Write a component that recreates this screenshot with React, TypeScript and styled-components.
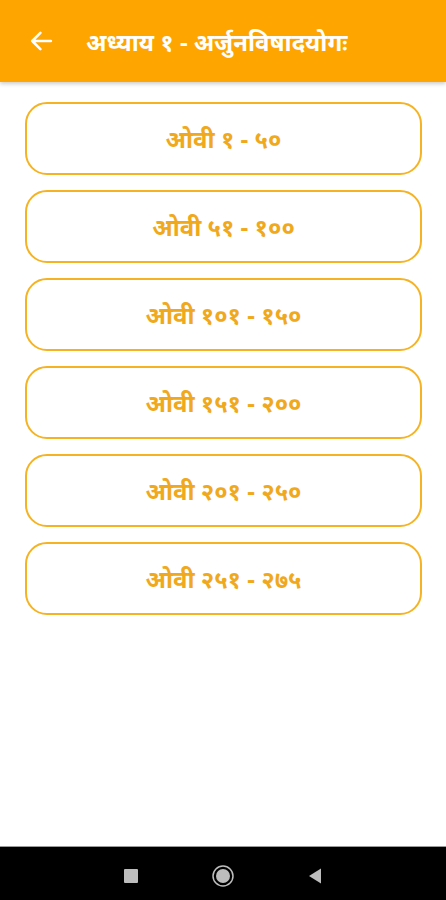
import { FunctionComponent } from "react";
import styled, { createGlobalStyle } from "styled-components";

const GlobalStyle = createGlobalStyle`
  html, body {
    margin: 0;
    padding: 0;
    background: #fff;
    font-family: "Noto Sans", "Roboto", sans-serif;
  }
`;

const Screen = styled.div`
  width: 446px;
  height: 900px;
  display: flex;
  flex-direction: column;
  background: #fff;
`;

const Header = styled.header`
  height: 82px;
  flex-shrink: 0;
  display: flex;
  align-items: center;
  padding: 0 0 0 27px;
  background: #ffa500;
  box-shadow: 0px 2px 4px rgba(0, 0, 0, 0.2);
  position: relative;
  z-index: 1;
`;

const BackButton = styled.button`
  width: 28px;
  height: 28px;
  padding: 0;
  border: none;
  background: none;
  display: flex;
  align-items: center;
  justify-content: center;
  margin-right: 31px;
`;

const Title = styled.h1`
  margin: 0;
  font-size: 24px;
  font-weight: 700;
  color: #fff;
`;

const List = styled.main`
  flex: 1;
  display: flex;
  flex-direction: column;
  gap: 15px;
  padding: 20px 24px 0 25px;
`;

const OviButton = styled.button`
  height: 73px;
  border: solid 2px #f5b323;
  border-radius: 22px;
  background: #fff;
  color: #f0a91c;
  font-family: "Noto Sans", "Roboto", sans-serif;
  font-size: 24px;
  font-weight: 700;
`;

const NavBar = styled.nav`
  height: 54px;
  flex-shrink: 0;
  box-sizing: border-box;
  padding-top: 5px;
  background: #000;
  border-top: solid 1px #9a9a9a;
  display: flex;
  justify-content: center;
  align-items: center;
  gap: 72px;
`;

const ranges = [
  "ओवी १ - ५०",
  "ओवी ५१ - १००",
  "ओवी १०१ - १५०",
  "ओवी १५१ - २००",
  "ओवी २०१ - २५०",
  "ओवी २५१ - २७५",
];

const App: FunctionComponent = () => {
  return (
    <Screen>
      <GlobalStyle />
      <Header>
        <BackButton>
          <svg width="28" height="28" viewBox="0 0 24 24">
            <path
              d="M20.5 12H4.5M11.5 5l-7 7 7 7"
              fill="none"
              stroke="#fff"
              strokeWidth="2.2"
              strokeLinecap="round"
              strokeLinejoin="round"
            />
          </svg>
        </BackButton>
        <Title>अध्याय १ - अर्जुनविषादयोगः</Title>
      </Header>
      <List>
        {ranges.map((r) => (
          <OviButton key={r}>{r}</OviButton>
        ))}
      </List>
      <NavBar>
        <svg width="16" height="16" viewBox="0 0 16 16">
          <rect x="1" y="1" width="14" height="14" rx="1" fill="#bdbdbd" />
        </svg>
        <svg width="24" height="24" viewBox="0 0 24 24">
          <circle cx="12" cy="12" r="10" fill="none" stroke="#bdbdbd" strokeWidth="1.5" />
          <circle cx="12" cy="12" r="7" fill="#bdbdbd" />
        </svg>
        <svg width="16" height="16" viewBox="0 0 16 16">
          <path d="M14 0.5v15L2 8z" fill="#bdbdbd" />
        </svg>
      </NavBar>
    </Screen>
  );
};

export default App;
